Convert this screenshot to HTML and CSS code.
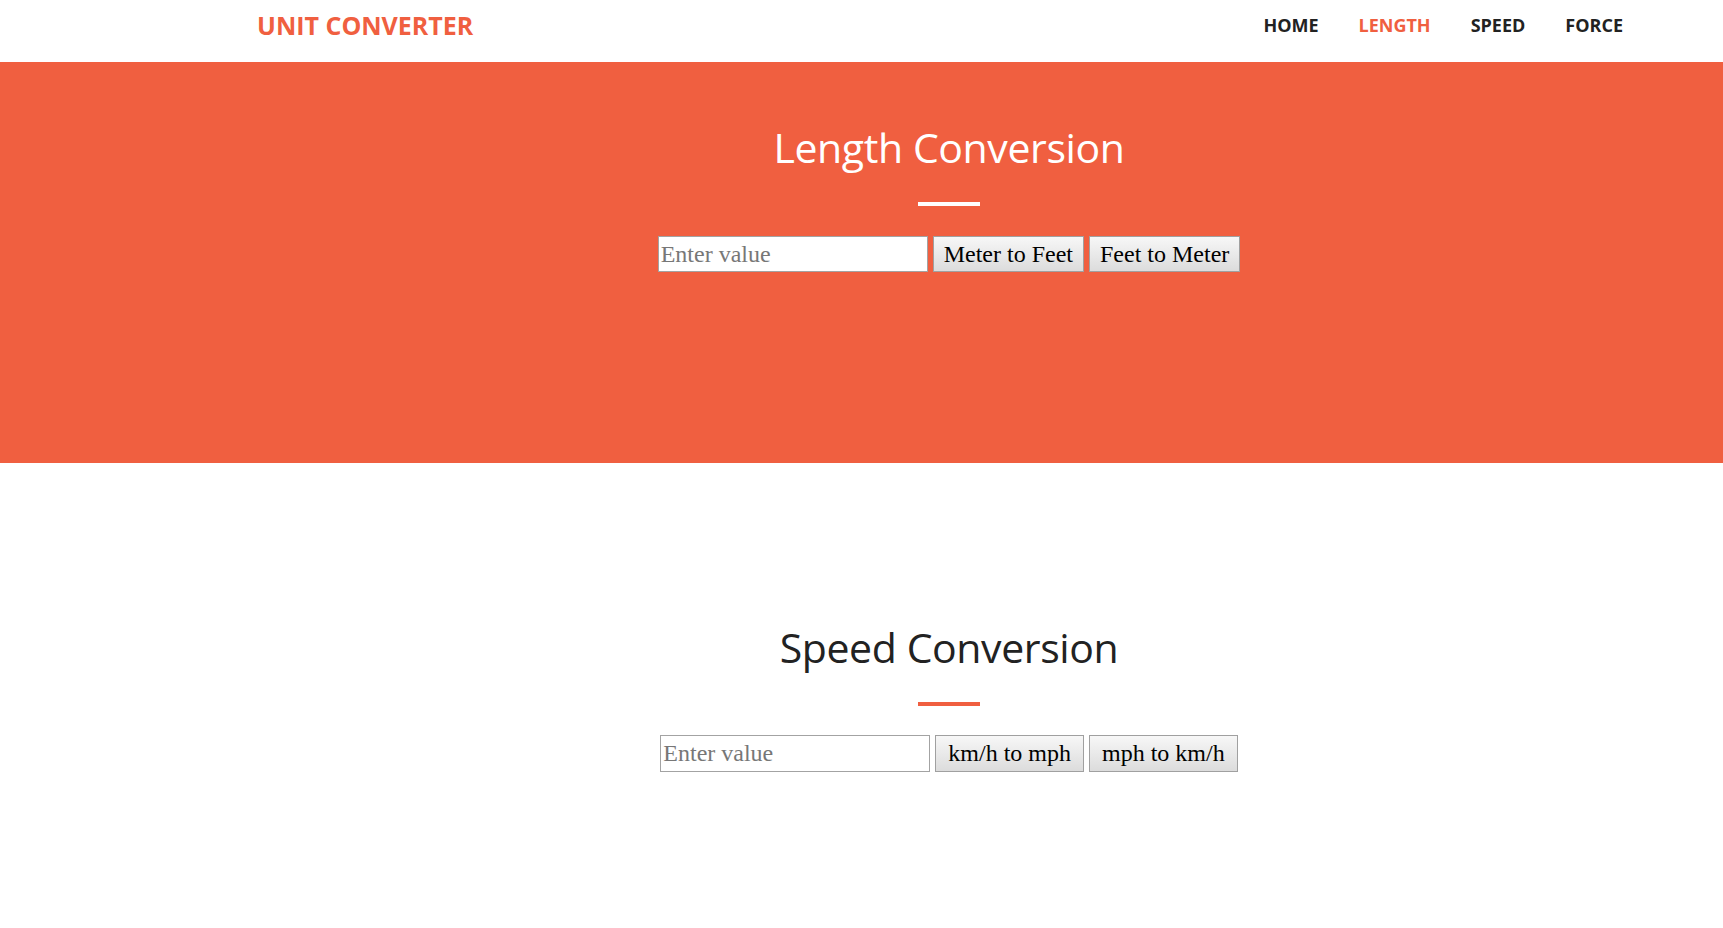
FILE: index.html
```html
<!DOCTYPE html>
<html lang="en">
<head>
<meta charset="utf-8">
<title>Unit Converter</title>
<link rel="stylesheet" href="styles.css">
</head>
<body>
<header class="topbar">
  <a class="brand" href="#">UNIT CONVERTER</a>
  <nav class="menu">
    <a class="menu-link" href="#">HOME</a>
    <a class="menu-link active" href="#">LENGTH</a>
    <a class="menu-link" href="#">SPEED</a>
    <a class="menu-link" href="#">FORCE</a>
  </nav>
</header>

<section class="hero">
  <h2 class="section-title light">Length Conversion</h2>
  <hr class="divider light">
  <div class="converter">
    <input class="value-input" type="text" placeholder="Enter value">
    <button class="convert-btn">Meter to Feet</button>
    <button class="convert-btn">Feet to Meter</button>
  </div>
</section>

<section class="plain">
  <h2 class="section-title">Speed Conversion</h2>
  <hr class="divider">
  <div class="converter">
    <input class="value-input tall" type="text" placeholder="Enter value">
    <button class="convert-btn tall">km/h to mph</button>
    <button class="convert-btn tall">mph to km/h</button>
  </div>
</section>
</body>
</html>
```

FILE: styles.css
```css
* { box-sizing: border-box; }

html, body {
  margin: 0;
  padding: 0;
  background: #fff;
  font-family: "Open Sans", "Liberation Sans", sans-serif;
  color: #222;
  overflow: hidden;
}

.topbar {
  height: 62px;
  display: flex;
  align-items: flex-start;
  justify-content: space-between;
  padding: 0 80px 0 257px;
  background: #fff;
}

.brand {
  margin-top: 10px;
  font-size: 25px;
  line-height: 30px;
  font-weight: 700;
  color: #F05F40;
  text-decoration: none;
}

.menu {
  display: flex;
  margin-top: 14px;
}

.menu-link {
  padding: 0 20px;
  font-size: 18px;
  line-height: 22px;
  font-weight: 700;
  color: #222;
  text-decoration: none;
}

.menu-link.active { color: #F05F40; }

.hero {
  background: #F05F40;
  height: 401px;
  padding: 59px 0 0 175px;
  text-align: center;
}

.plain {
  padding: 158px 0 0 175px;
  text-align: center;
  height: 466px;
}

.section-title {
  margin: 0;
  font-size: 41px;
  line-height: 52px;
  letter-spacing: -0.4px;
  font-weight: 400;
  color: #222;
}

.section-title.light { color: #fff; }

.divider {
  width: 62px;
  height: 4px;
  margin: 29px auto 29px;
  border: 0;
  background: #F05F40;
}

.divider.light {
  background: #fff;
  margin-bottom: 30px;
}

.converter {
  display: flex;
  justify-content: center;
  gap: 5px;
}

.value-input {
  width: 270px;
  height: 36px;
  padding: 0 2px;
  border: 1px solid #a3a3a3;
  background: #fff;
  font-family: "Liberation Serif", "DejaVu Serif", serif;
  font-size: 24px;
  color: #222;
}

.value-input::placeholder { color: #777; }

.convert-btn {
  height: 36px;
  padding: 0 10px;
  border: 1px solid #a0a0a0;
  border-radius: 0;
  background: linear-gradient(#f7f7f7, #dcdcdc);
  font-family: "Liberation Serif", "DejaVu Serif", serif;
  font-size: 24px;
  color: #000;
}

.convert-btn.tall { padding: 0 12px; }

.tall { height: 37px; }
```
